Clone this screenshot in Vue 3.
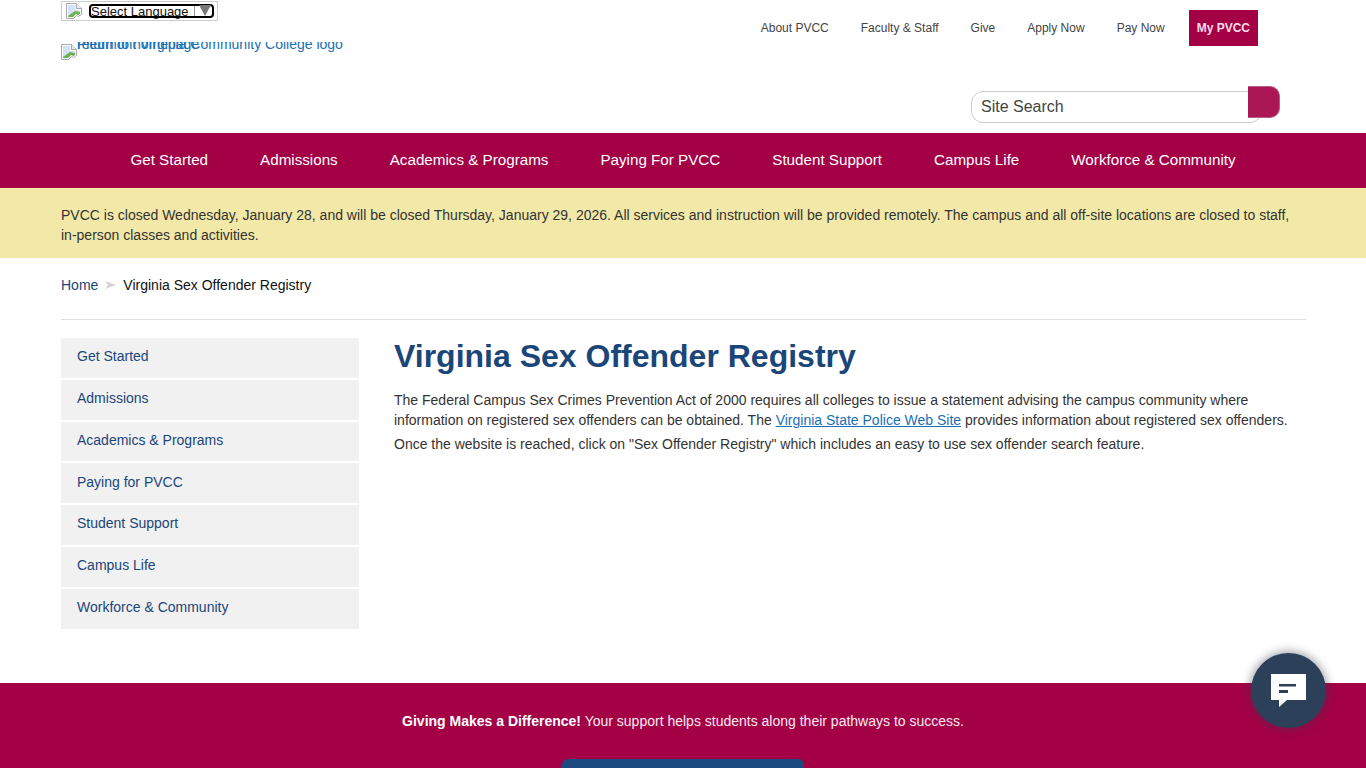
<template>
  <div class="page">
    <header class="top">
      <div class="wrap top-inner">
        <div class="brand">
          <div class="translate">
            <svg class="broken" width="16" height="16" viewBox="0 0 16 16"><path d="M.5.5h10l5 5v6l-3 2-2-1-3 3H.5z" fill="#fff" stroke="#a9a9a9"/><path d="M10.500.5v5h5" fill="#ececec" stroke="#a9a9a9"/><path d="M2 2h7.500v5H14v3l-2 1-2-1-4 3H2z" fill="#d3e2f7"/><path d="M2 14v-1l7-5 5 1v2l-2 1-2-1-3 3z" fill="#6db24a"/></svg>
            <span class="lang-select">Select Language<i class="lang-bar"></i><i class="lang-arrow"></i></span>
          </div>
          <a class="logo">
            <svg class="broken" width="16" height="16" viewBox="0 0 16 16"><path d="M.5.5h10l5 5v6l-3 2-2-1-3 3H.5z" fill="#fff" stroke="#a9a9a9"/><path d="M10.500.5v5h5" fill="#ececec" stroke="#a9a9a9"/><path d="M2 2h7.500v5H14v3l-2 1-2-1-4 3H2z" fill="#d3e2f7"/><path d="M2 14v-1l7-5 5 1v2l-2 1-2-1-3 3z" fill="#6db24a"/></svg>
            <span class="alt">Piedmont Virginia Community College logo</span>
            <span class="alt-over">return to homepage</span>
          </a>
        </div>
        <div class="tools">
          <nav class="utility">
            <a v-for="l in utility" :key="l">{{ l }}</a>
            <a class="my">My PVCC</a>
          </nav>
          <div class="search">
            <span class="search-box">Site Search</span>
            <span class="search-btn"></span>
          </div>
        </div>
      </div>
    </header>

    <nav class="mainnav">
      <a v-for="l in mainLinks" :key="l">{{ l }}</a>
    </nav>

    <div class="alert">
      <p class="wrap">PVCC is closed Wednesday, January 28, and will be closed Thursday, January 29, 2026. All services and instruction will be provided remotely. The campus and all off-site locations are closed to staff, in-person classes and activities.</p>
    </div>

    <div class="wrap crumbs">
      <a>Home</a>
      <svg class="sep" width="11" height="8" viewBox="0 0 11 8"><path d="M0 0l11 4-11 4 3-4z" fill="#d4d4d4"/></svg>
      <span>Virginia Sex Offender Registry</span>
    </div>

    <main class="wrap content">
      <aside class="side">
        <a v-for="l in sideLinks" :key="l">{{ l }}</a>
      </aside>
      <article class="body">
        <h1>Virginia Sex Offender Registry</h1>
        <p class="first">The Federal Campus Sex Crimes Prevention Act of 2000 requires all colleges to issue a statement advising the campus community where information on registered sex offenders can be obtained. The <a>Virginia State Police Web Site</a> provides information about registered sex offenders.</p>
        <p>Once the website is reached, click on "Sex Offender Registry" which includes an easy to use sex offender search feature.</p>
      </article>
    </main>

    <footer class="foot">
      <p><b>Giving Makes a Difference!</b> Your support helps students along their pathways to success.</p>
      <span class="give"></span>
    </footer>

    <button class="chat" aria-label="Chat">
      <svg width="35" height="33" viewBox="0 0 35 33"><path d="M0 0h35v26H16l-8 7v-7H0z" fill="#fff"/><path d="M8 10h17v2.500H8zM8 16h9v3H8z" fill="#2d4059"/></svg>
    </button>
  </div>
</template>

<script setup>
const utility = ['About PVCC', 'Faculty & Staff', 'Give', 'Apply Now', 'Pay Now']
const mainLinks = ['Get Started', 'Admissions', 'Academics & Programs', 'Paying For PVCC', 'Student Support', 'Campus Life', 'Workforce & Community']
const sideLinks = ['Get Started', 'Admissions', 'Academics & Programs', 'Paying for PVCC', 'Student Support', 'Campus Life', 'Workforce & Community']
</script>

<style>
html, body {
  margin: 0;
  height: 768px;
  overflow: hidden;
  background: #fff;
}
</style>

<style scoped>
.page {
  position: relative;
  height: 768px;
  overflow: hidden;
  font-family: "Liberation Sans", Arial, sans-serif;
  font-size: 14px;
  color: #333;
}

.wrap {
  width: 1245px;
  margin-left: 61px;
  box-sizing: border-box;
}

.top {
  height: 133px;
}

.top-inner {
  display: flex;
  justify-content: space-between;
  width: 1219px;
}

.brand {
  width: 300px;
}

.translate {
  display: flex;
  align-items: center;
  box-sizing: border-box;
  width: 157px;
  height: 20px;
  margin-top: 1px;
  padding-left: 4px;
  border: 1px solid #ccc;
}

.broken {
  flex: none;
}

.lang-select {
  position: relative;
  display: block;
  box-sizing: border-box;
  width: 125px;
  height: 14px;
  margin-left: 7px;
  border: 2px solid #000;
  border-radius: 4px;
  color: #111;
  font-size: 13px;
  line-height: 12px;
  white-space: nowrap;
}

.lang-bar {
  position: absolute;
  right: 17px;
  top: 0;
  width: 1px;
  height: 10px;
  background: #999;
}

.lang-arrow {
  position: absolute;
  right: 1px;
  top: -1px;
  border-left: 6px solid transparent;
  border-right: 6px solid transparent;
  border-top: 11px solid #777;
}

.logo {
  position: relative;
  display: flex;
  margin-top: 21px;
  height: 18px;
  overflow: hidden;
  color: #1a6fb5;
  font-size: 14px;
  line-height: 16px;
  white-space: nowrap;
}

.logo .broken {
  margin-top: 2px;
}

.alt {
  margin-top: -6px;
}

.alt-over {
  position: absolute;
  left: 16px;
  top: -6px;
}

.tools {
  display: flex;
  flex-direction: column;
  align-items: flex-end;
}

.utility {
  display: flex;
  align-items: center;
  height: 36px;
  margin-top: 10px;
  margin-right: 22px;
  font-size: 12px;
  color: #444;
}

.utility a {
  margin-left: 32px;
}

.utility .my {
  display: flex;
  align-items: center;
  height: 36px;
  margin-left: 24px;
  padding: 0 8px;
  background: #a30046;
  color: #fbdde8;
  font-weight: 700;
}

.search {
  position: relative;
  display: flex;
  margin-top: 45px;
}

.search-box {
  box-sizing: border-box;
  width: 291px;
  height: 32px;
  margin-right: 18px;
  padding: 0 9px;
  border: 1px solid #ccc;
  border-radius: 12px;
  font-size: 16px;
  line-height: 29px;
  color: #444;
}

.search-btn {
  position: absolute;
  right: 0;
  top: -5px;
  box-sizing: border-box;
  width: 32px;
  height: 32px;
  background: #ab1654;
  border: 1px solid #b55c80;
  border-left: 0;
  border-radius: 0 10px 10px 0;
}

.mainnav {
  display: flex;
  justify-content: center;
  gap: 52px;
  align-items: center;
  box-sizing: border-box;
  height: 55px;
  padding-bottom: 2px;
  background: #a30046;
  color: #fff;
  font-size: 15.2px;
}

.alert {
  height: 70px;
  box-sizing: border-box;
  padding-top: 17px;
  background: #f2e9a9;
}

.alert p {
  margin: 0 0 0 61px;
  font-size: 14px;
  line-height: 20px;
  color: #333;
}

.crumbs {
  display: flex;
  align-items: center;
  height: 62px;
  padding-bottom: 8px;
  border-bottom: 1px solid #ddd;
  color: #111;
}

.crumbs a {
  color: #1b4679;
}

.sep {
  margin: 0 7px;
}

.content {
  display: flex;
  gap: 35px;
  margin-top: 18px;
}

.side {
  display: flex;
  flex-direction: column;
  gap: 2px;
  flex: none;
  width: 298px;
}

.side a {
  box-sizing: border-box;
  height: 39.8px;
  padding: 10.2px 16px;
  background: #f1f1f1;
  color: #1b4679;
  line-height: 17px;
}

.body {
  flex: 1;
}

h1 {
  margin: 0 0 16px;
  font-size: 32px;
  line-height: 36px;
  color: #1b4679;
}

.body p {
  margin: 0 0 4px;
  line-height: 20px;
}

.body a {
  color: #1a6fb5;
  text-decoration: underline;
}

.foot {
  position: absolute;
  left: 0;
  right: 0;
  top: 683px;
  height: 85px;
  background: #a30046;
  color: #fbeaf0;
  text-align: center;
}

.foot p {
  margin: 30px 0 0;
}

.foot b {
  color: #fff;
}

.give {
  position: absolute;
  left: 562px;
  top: 76px;
  width: 242px;
  height: 20px;
  background: #1b4a80;
  border-radius: 6px 6px 0 0;
}

.chat {
  position: absolute;
  left: 1251px;
  top: 653px;
  display: flex;
  align-items: center;
  justify-content: center;
  width: 75px;
  height: 75px;
  padding: 0;
  border: 0;
  border-radius: 50%;
  background: #2d4059;
  box-shadow: 0 0 8px 2px rgba(60, 60, 80, .45);
}
</style>
